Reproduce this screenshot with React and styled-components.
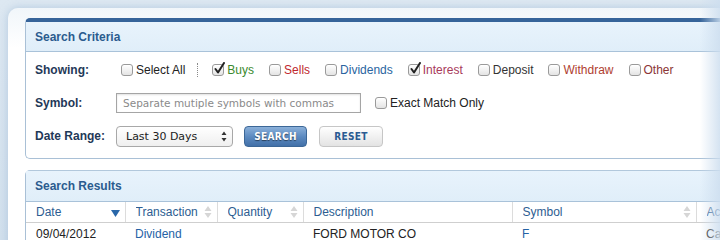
import React from "react"
import styled, { createGlobalStyle } from "styled-components"

const GlobalStyle = createGlobalStyle`
  html, body {
    margin: 0;
    padding: 0;
  }
  body {
    background: #d6e3ef;
    font-family: "Liberation Sans", Arial, sans-serif;
    font-size: 12px;
  }
`

const Page = styled.div`
  position: relative;
  width: 720px;
  height: 240px;
  overflow: hidden;
  background: linear-gradient(to bottom, #dde8f2, #d2e0ed);
`

const Sheet = styled.div`
  margin: 8px 0 0 8px;
  padding: 10px 0 0 17px;
  width: 760px;
  height: 260px;
  border-radius: 10px 0 0 0;
  background: linear-gradient(to bottom, #f1f6fa, #ffffff 40px);
  box-shadow: 0 0 8px rgba(150, 180, 210, 0.6);
`

const RightFade = styled.div`
  position: absolute;
  top: 0;
  right: 0;
  bottom: 0;
  width: 20px;
  background: linear-gradient(to right, rgba(214, 228, 241, 0), rgba(205, 222, 239, 0.85));
  pointer-events: none;
`

const Panel = styled.section`
  width: 720px;
  background: #fff;
  border: 1px solid #a9c0d6;
  border-right: none;
  border-top: ${p => (p.$accent ? "4px solid #36649a" : "1px solid #b2c8dc")};
  border-radius: 5px 0 0 5px;
  & + & {
    margin-top: 11px;
  }
`

const PanelHeader = styled.h2`
  margin: 0;
  height: ${p => (p.$tall ? "30px" : "29px")};
  padding-left: 9px;
  display: flex;
  align-items: center;
  background: linear-gradient(to bottom, #e8f3fc, #e0eef9);
  border-bottom: 1px solid #a9c2d9;
  font-size: 12px;
  font-weight: bold;
  color: #2b5b8e;
`

const Form = styled.div`
  padding: 7px 0 11px 9px;
  display: grid;
  row-gap: 11px;
`

const Row = styled.div`
  display: flex;
  align-items: center;
  height: 22px;
`

const Label = styled.span`
  width: 81px;
  flex: none;
  font-weight: bold;
  color: #1f3958;
`

const CheckGroup = styled.div`
  display: flex;
  align-items: center;
  padding-left: 5px;
`

const Item = styled.label`
  display: inline-flex;
  align-items: center;
  gap: 3px;
  margin-right: ${p => p.$gap ?? 15}px;
  color: ${p => p.$color || "#222"};
  white-space: nowrap;
`

const Box = styled.span`
  position: relative;
  width: 10px;
  height: 10px;
  flex: none;
  border: 1px solid #9a9a9a;
  border-radius: 3px;
  background: linear-gradient(to bottom, #ffffff, #e4e4e4);
  box-shadow: inset 0 1px 0 #fff;

  svg {
    position: absolute;
    left: 0;
    top: -3px;
  }
`

const Separator = styled.span`
  width: 0;
  height: 14px;
  border-left: 1px dotted #8a8a8a;
  margin: 0 14px 0 -4px;
`

const TextInput = styled.div`
  width: 231px;
  height: 18px;
  padding: 0 6px;
  display: flex;
  align-items: center;
  border: 1px solid #a5a5a5;
  box-shadow: inset 0 1px 2px rgba(0, 0, 0, 0.12);
  font-family: "DejaVu Sans", sans-serif;
  font-size: 10.5px;
  color: #8a8a8a;
  margin-right: 14px;
`

const Select = styled.div`
  width: 106px;
  height: 19px;
  padding: 0 0 0 9px;
  display: flex;
  align-items: center;
  justify-content: space-between;
  border: 1px solid #a8a8a8;
  border-radius: 4px;
  background: linear-gradient(to bottom, #ffffff, #efefef);
  font-family: "DejaVu Sans", sans-serif;
  font-size: 11px;
  color: #222;

  svg {
    margin-right: 5px;
  }
`

const Button = styled.button`
  height: 21px;
  width: ${p => (p.$primary ? "63px" : "64px")};
  margin-left: ${p => (p.$primary ? "11px" : "12px")};
  padding: 0;
  border-radius: 4px;
  font-family: "DejaVu Sans Condensed", "DejaVu Sans", sans-serif;
  font-weight: bold;
  font-size: 10px;
  letter-spacing: 0.3px;
  border: 1px solid ${p => (p.$primary ? "#3c6797" : "#c6c6c6")};
  color: ${p => (p.$primary ? "#ffffff" : "#2a5b92")};
  background: ${p =>
    p.$primary
      ? "linear-gradient(to bottom, #8bb0d9, #5d8bc1 50%, #4270a8)"
      : "linear-gradient(to bottom, #ffffff, #e3e3e3)"};
  text-shadow: ${p => (p.$primary ? "0 1px 1px rgba(0, 0, 0, 0.5)" : "none")};
`

const Table = styled.table`
  width: 719px;
  table-layout: fixed;
  border-collapse: collapse;
  font-size: 12px;
`

const Th = styled.th`
  height: 20px;
  padding: 0 5px 0 10px;
  border-right: 1px solid #dcdcdc;
  border-bottom: 1px solid #cfcfcf;
  font-weight: normal;
  text-align: left;
  color: #2d5d91;
  &:last-child {
    border-right: none;
  }
`

const ThInner = styled.div`
  display: flex;
  align-items: center;
  justify-content: space-between;
  white-space: nowrap;
  overflow: hidden;
`

const Td = styled.td`
  height: 21px;
  padding: 0 10px;
  color: ${p => (p.$link ? "#2562a5" : "#222")};
  white-space: nowrap;
  overflow: hidden;
`

const Check = () => (
  <svg width="13" height="13" viewBox="0 0 13 13">
    <path d="M2.5 7 L5 10.5 L11 1" fill="none" stroke="#222" strokeWidth="2" strokeLinecap="round" strokeLinejoin="round" />
  </svg>
)

const Checkbox = ({ checked, color, gap, children }) => (
  <Item $color={color} $gap={gap}>
    <Box>{checked && <Check />}</Box>
    {children}
  </Item>
)

const SortBoth = () => (
  <svg width="8" height="14" viewBox="0 0 8 14">
    <path d="M4 1 L7.5 6 H0.5 Z M4 13 L0.5 8 H7.5 Z" fill="#d6d6d6" />
  </svg>
)

const SortDown = () => (
  <svg width="9" height="7" viewBox="0 0 9 7" style={{ marginTop: 3 }}>
    <path d="M0 0 H9 L4.5 7 Z" fill="#2a67a9" />
  </svg>
)

const Updown = () => (
  <svg width="6" height="11" viewBox="0 0 6 11">
    <path d="M3 0.5 L5.5 4 H0.5 Z M3 10.5 L0.5 7 H5.5 Z" fill="#333" />
  </svg>
)

const filters = [
  { label: "Buys", color: "#3a8a2e", checked: true },
  { label: "Sells", color: "#c0282e" },
  { label: "Dividends", color: "#2a64a0" },
  { label: "Interest", color: "#a83a5a", checked: true },
  { label: "Deposit", color: "#333" },
  { label: "Withdraw", color: "#b04030" },
  { label: "Other", color: "#8b3535" },
]

const columns = [
  { title: "Date", width: 99, sort: "down" },
  { title: "Transaction", width: 92, sort: "both" },
  { title: "Quantity", width: 86, sort: "both" },
  { title: "Description", width: 209 },
  { title: "Symbol", width: 184, sort: "both" },
  { title: "Account" },
]

export default function App() {
  return (
    <>
      <GlobalStyle />
      <Page>
        <Sheet>
          <Panel $accent>
            <PanelHeader>Search Criteria</PanelHeader>
            <Form>
              <Row>
                <Label>Showing:</Label>
                <CheckGroup>
                  <Checkbox gap={16}>Select All</Checkbox>
                  <Separator />
                  {filters.map(f => (
                    <Checkbox key={f.label} color={f.color} checked={f.checked}>
                      {f.label}
                    </Checkbox>
                  ))}
                </CheckGroup>
              </Row>
              <Row>
                <Label>Symbol:</Label>
                <TextInput>Separate mutiple symbols with commas</TextInput>
                <Checkbox>Exact Match Only</Checkbox>
              </Row>
              <Row>
                <Label>Date Range:</Label>
                <Select>
                  Last 30 Days
                  <Updown />
                </Select>
                <Button $primary>SEARCH</Button>
                <Button>RESET</Button>
              </Row>
            </Form>
          </Panel>
          <Panel>
            <PanelHeader $tall>Search Results</PanelHeader>
            <Table>
              <colgroup>
                {columns.map(c => (
                  <col key={c.title} style={c.width ? { width: c.width } : undefined} />
                ))}
              </colgroup>
              <thead>
                <tr>
                  {columns.map(c => (
                    <Th key={c.title}>
                      <ThInner>
                        {c.title}
                        {c.sort === "down" && <SortDown />}
                        {c.sort === "both" && <SortBoth />}
                      </ThInner>
                    </Th>
                  ))}
                </tr>
              </thead>
              <tbody>
                <tr>
                  <Td>09/04/2012</Td>
                  <Td $link>Dividend</Td>
                  <Td></Td>
                  <Td>FORD MOTOR CO</Td>
                  <Td $link>F</Td>
                  <Td>Cash</Td>
                </tr>
              </tbody>
            </Table>
          </Panel>
        </Sheet>
        <RightFade />
      </Page>
    </>
  )
}
